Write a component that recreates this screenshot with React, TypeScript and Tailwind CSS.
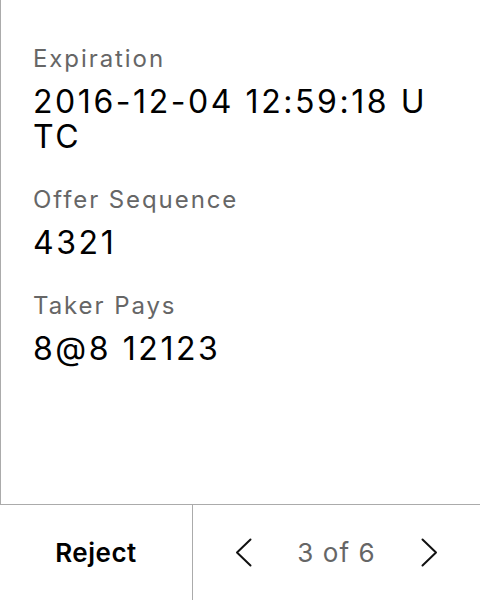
import React from "react";

const fields = [
  { label: "Expiration", value: "2016-12-04 12:59:18 UTC" },
  { label: "Offer Sequence", value: "4321" },
  { label: "Taker Pays", value: "8@8 12123" },
];

export default function App() {
  return (
    <div
      className="flex h-[600px] w-[480px] flex-col bg-white"
      style={{ fontFamily: "Inter, 'Noto Sans', sans-serif" }}
    >
      <div className="flex flex-1 flex-col gap-[31px] border-l border-[#ababab] pl-8 pr-[42px] pt-[44px]">
        {fields.map((f) => (
          <div key={f.label} className="flex flex-col gap-[11px]">
            <div className="text-[24px] leading-[29px] tracking-[0.08em] text-[#666666]">{f.label}</div>
            <div className="break-all text-[32px] leading-[35px] tracking-[0.08em] text-black">{f.value}</div>
          </div>
        ))}
      </div>
      <div className="flex h-[96px] border-t border-[#ababab]">
        <div className="flex w-[193px] items-center justify-center border-r border-[#ababab]">
          <span className="text-[26px] font-semibold tracking-[0.02em] text-black">Reject</span>
        </div>
        <div className="flex flex-1 items-center justify-between px-[42px]">
          <svg width="17" height="29" viewBox="0 0 17 29" fill="none">
            <path d="M15.5 1.5 L2 14.5 L15.5 27.5" stroke="#111" strokeWidth="2" strokeLinecap="round" strokeLinejoin="round" />
          </svg>
          <span className="text-[26px] tracking-[0.04em] text-[#666666]">3 of 6</span>
          <svg width="17" height="29" viewBox="0 0 17 29" fill="none">
            <path d="M1.5 1.5 L15 14.5 L1.5 27.5" stroke="#111" strokeWidth="2" strokeLinecap="round" strokeLinejoin="round" />
          </svg>
        </div>
      </div>
    </div>
  );
}
